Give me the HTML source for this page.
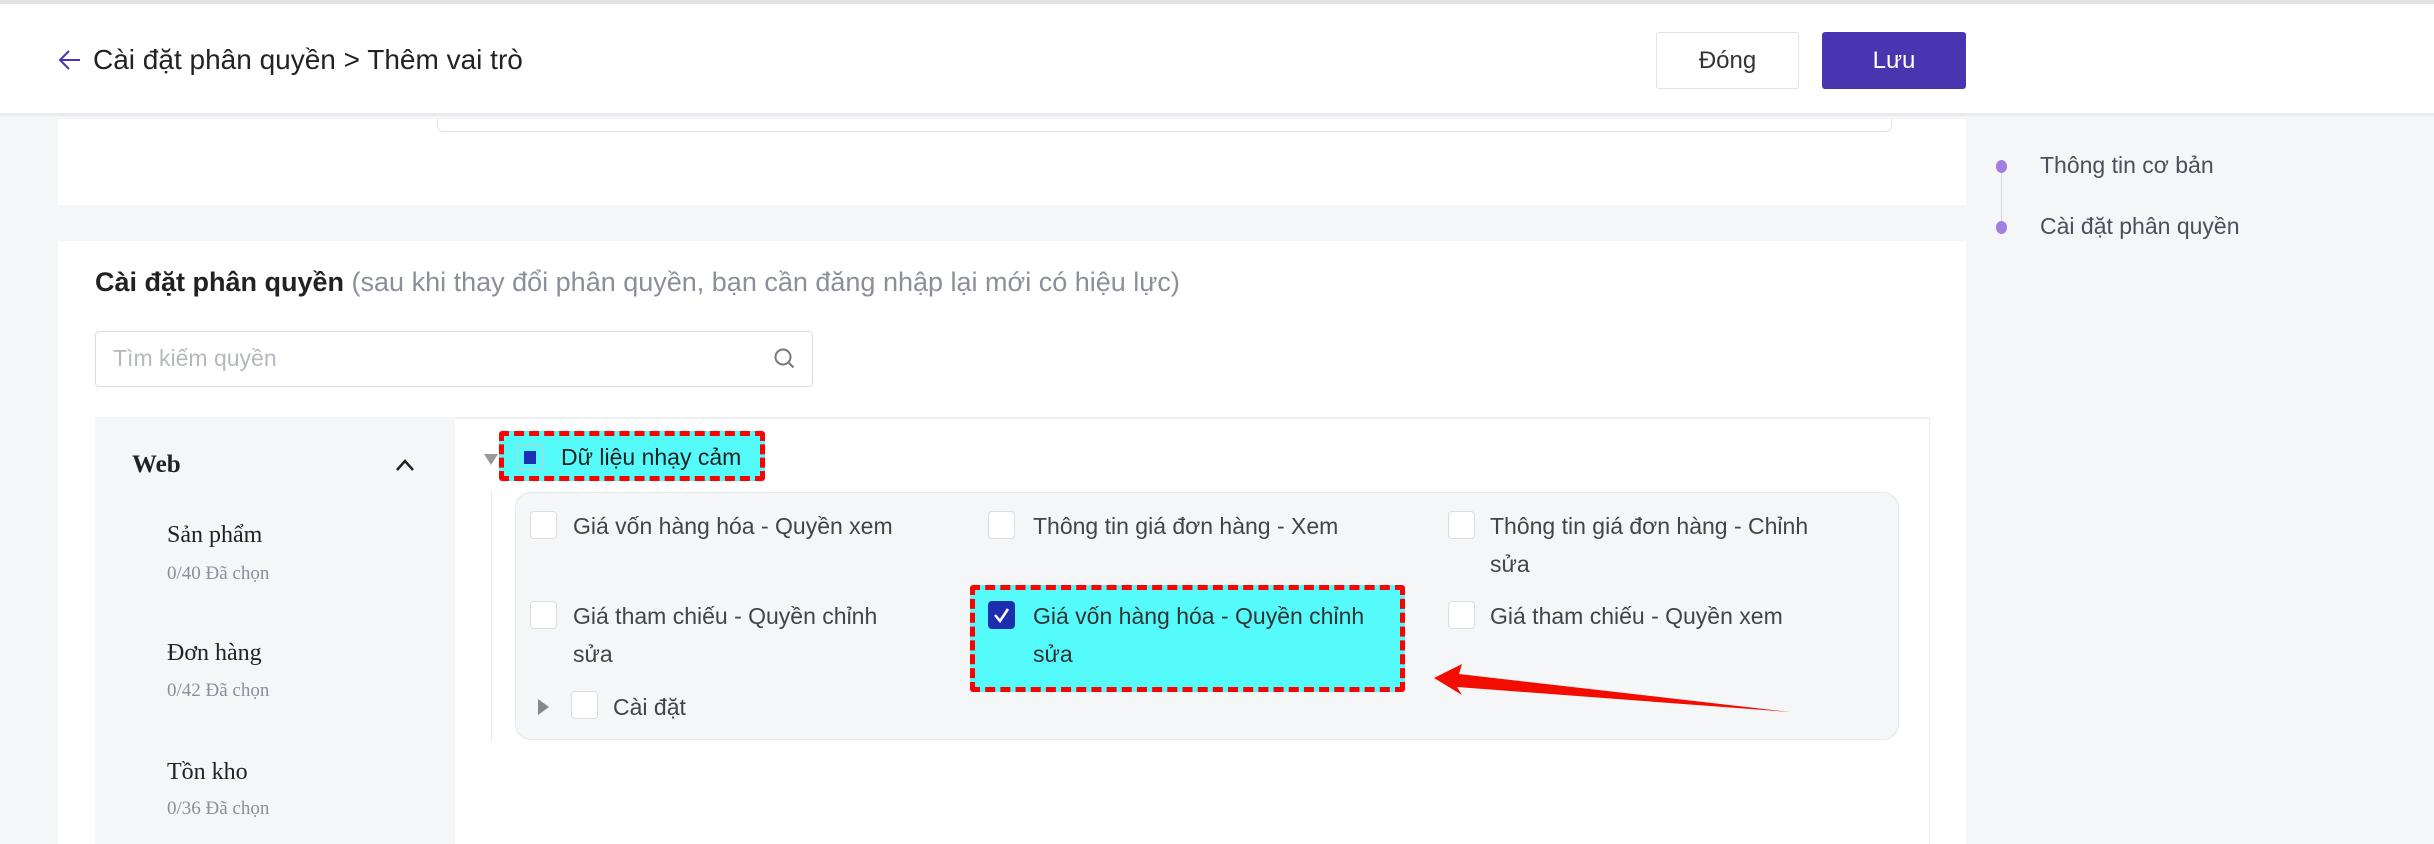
<!DOCTYPE html>
<html><head><meta charset="utf-8"><style>
*{margin:0;padding:0;box-sizing:border-box}
body{width:2434px;height:844px;overflow:hidden;background:#f5f6f8;font-family:"Liberation Sans","Noto Sans CJK SC",sans-serif;position:relative;color:#333}
.a{position:absolute;white-space:nowrap}
.cb{position:absolute;width:27px;height:28px;background:#fff;border:1px solid #dcdde2;border-radius:4px}
.it{position:absolute;font-size:23px;color:#444;line-height:38px}
.serif{font-family:"Liberation Serif",serif}
</style></head><body>
<div class="a" style="left:0;top:0;width:2434px;height:4px;background:#e2e2e2"></div>
<div class="a" style="left:0;top:4px;width:2434px;height:112px;background:#fff;border-bottom:3px solid #e9eaee"></div>
<svg class="a" style="left:58px;top:49px" width="24" height="22" viewBox="0 0 24 22"><path d="M22 11H3M11 2L2 11l9 9" fill="none" stroke="#4a35b0" stroke-width="2"/></svg>
<div class="a" style="left:93px;top:44px;font-size:28px;color:#222">Cài đặt phân quyền &gt; Thêm vai trò</div>
<div class="a" style="left:1656px;top:32px;width:143px;height:57px;border:1px solid #e2e2e8;border-radius:3px;background:#fff;font-size:24px;line-height:55px;text-align:center;color:#333">Đóng</div>
<div class="a" style="left:1822px;top:32px;width:144px;height:57px;border-radius:3px;background:#4a35b0;font-size:24px;line-height:57px;text-align:center;color:#fff">Lưu</div>

<div class="a" style="left:58px;top:119px;width:1908px;height:86px;background:#fff"></div>
<div class="a" style="left:437px;top:119px;width:1455px;height:13px;border:1px solid #e2e3e8;border-top:none;border-radius:0 0 6px 6px"></div>
<div class="a" style="left:58px;top:241px;width:1908px;height:603px;background:#fff"></div>
<div class="a" style="left:1966px;top:119px;width:468px;height:725px;background:#f5f6f8"></div>
<div class="a" style="left:2001px;top:166px;width:1px;height:61px;background:#d8d8de"></div>
<div class="a" style="left:1996px;top:160px;width:11px;height:13px;border-radius:50%;background:#a27ee0"></div>
<div class="a" style="left:1996px;top:221px;width:11px;height:13px;border-radius:50%;background:#a27ee0"></div>
<div class="a" style="left:2040px;top:152px;font-size:23px;color:#4a4f5a">Thông tin cơ bản</div>
<div class="a" style="left:2040px;top:213px;font-size:23px;color:#4a4f5a">Cài đặt phân quyền</div>

<div class="a" style="left:95px;top:267px;font-size:27px;color:#222"><b>Cài đặt phân quyền</b> <span style="color:#8a8f99">(sau khi thay đổi phân quyền, bạn cần đăng nhập lại mới có hiệu lực)</span></div>
<div class="a" style="left:95px;top:331px;width:718px;height:56px;border:1px solid #dcdde2;border-radius:4px;background:#fff"></div>
<div class="a" style="left:113px;top:345px;font-size:23px;color:#b5b8bf">Tìm kiếm quyền</div>
<svg class="a" style="left:772px;top:346px" width="26" height="26" viewBox="0 0 26 26"><circle cx="11" cy="11" r="7.5" fill="none" stroke="#777" stroke-width="2"/><path d="M16.5 16.5l5 5" stroke="#777" stroke-width="2"/></svg>

<div class="a" style="left:95px;top:417px;width:1835px;height:427px;border-top:2px solid #eeeff2;border-right:1px solid #eeeff2"></div>
<div class="a" style="left:95px;top:417px;width:360px;height:427px;background:#f5f6f8"></div>
<div class="a serif" style="left:132px;top:451px;font-size:25px;font-weight:bold;color:#222">Web</div>
<svg class="a" style="left:395px;top:458px" width="20" height="14" viewBox="0 0 20 14"><path d="M2 12L10 3l8 9" fill="none" stroke="#222" stroke-width="2.5"/></svg>
<div class="a serif" style="left:167px;top:522px;font-size:24px;color:#222">Sản phẩm</div>
<div class="a serif" style="left:167px;top:563px;font-size:19px;color:#8a8f99">0/40 Đã chọn</div>
<div class="a serif" style="left:167px;top:640px;font-size:24px;color:#222">Đơn hàng</div>
<div class="a serif" style="left:167px;top:680px;font-size:19px;color:#8a8f99">0/42 Đã chọn</div>
<div class="a serif" style="left:167px;top:759px;font-size:24px;color:#222">Tồn kho</div>
<div class="a serif" style="left:167px;top:798px;font-size:19px;color:#8a8f99">0/36 Đã chọn</div>

<svg class="a" style="left:484px;top:454px" width="14" height="12" viewBox="0 0 14 12"><path d="M0 0h14L7 11z" fill="#999"/></svg>
<div class="a" style="left:499px;top:431px;width:266px;height:50px;background:#55fafa;border:5px dashed #f00;border-radius:3px"></div>
<div class="a" style="left:517px;top:444px;width:26px;height:26px;border:1px solid #ccc;border-radius:3px;background:#55fafa"></div>
<div class="a" style="left:524px;top:451px;width:12px;height:13px;background:#1f2fb5"></div>
<div class="a" style="left:561px;top:444px;font-size:23px;color:#222">Dữ liệu nhạy cảm</div>

<div class="a" style="left:491px;top:492px;width:1px;height:248px;background:#e6e6ea"></div>
<div class="a" style="left:515px;top:492px;width:1384px;height:248px;background:#f5f6f8;border:1px solid #e6e7eb;border-radius:16px"></div>

<div class="cb" style="left:530px;top:511px"></div>
<div class="it" style="left:573px;top:507px">Giá vốn hàng hóa - Quyền xem</div>
<div class="cb" style="left:988px;top:511px"></div>
<div class="it" style="left:1033px;top:507px">Thông tin giá đơn hàng - Xem</div>
<div class="cb" style="left:1448px;top:511px"></div>
<div class="it" style="left:1490px;top:507px">Thông tin giá đơn hàng - Chỉnh<br>sửa</div>

<div class="cb" style="left:530px;top:601px"></div>
<div class="it" style="left:573px;top:597px">Giá tham chiếu - Quyền chỉnh<br>sửa</div>
<div class="a" style="left:970px;top:585px;width:435px;height:107px;background:#55fafa;border:5px dashed #f00;border-radius:3px"></div>
<div class="a" style="left:988px;top:601px;width:27px;height:28px;background:#1d2db0;border-radius:4px"></div>
<svg class="a" style="left:988px;top:601px" width="27" height="28" viewBox="0 0 27 28"><path d="M7 14l5 6 8-12" fill="none" stroke="#fff" stroke-width="2.5"/></svg>
<div class="it" style="left:1033px;top:597px;color:#333">Giá vốn hàng hóa - Quyền chỉnh<br>sửa</div>
<div class="cb" style="left:1448px;top:601px"></div>
<div class="it" style="left:1490px;top:597px">Giá tham chiếu - Quyền xem</div>

<svg class="a" style="left:538px;top:699px" width="12" height="16" viewBox="0 0 12 16"><path d="M0 0l11 8L0 16z" fill="#888"/></svg>
<div class="cb" style="left:571px;top:691px"></div>
<div class="it" style="left:613px;top:688px">Cài đặt</div>

<svg class="a" style="left:1420px;top:655px" width="380" height="70" viewBox="1420 655 380 70"><path d="M1434 678L1462 664L1459 674L1790 712L1457 687L1462 695Z" fill="#f20d00"/></svg>
</body></html>
